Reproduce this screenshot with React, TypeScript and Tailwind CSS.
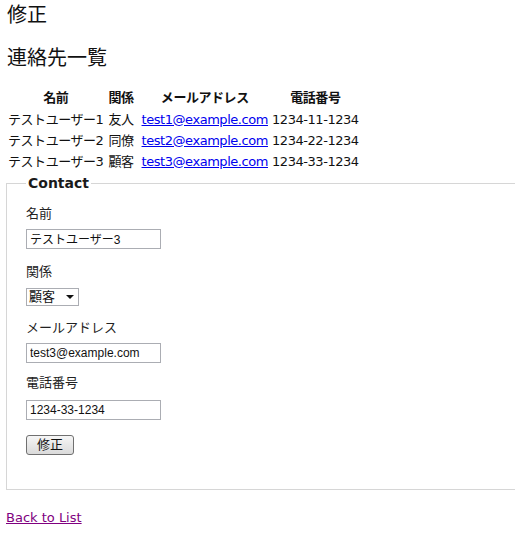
const contacts = [
  { name: 'テストユーザー1', relation: '友人', email: 'test1@example.com', phone: '1234-11-1234' },
  { name: 'テストユーザー2', relation: '同僚', email: 'test2@example.com', phone: '1234-22-1234' },
  { name: 'テストユーザー3', relation: '顧客', email: 'test3@example.com', phone: '1234-33-1234' },
];

const bodyFont = "font-['DejaVu_Sans','Noto_Sans_CJK_JP',sans-serif]";
const inputFont = "font-['Liberation_Sans','Noto_Sans_CJK_JP',sans-serif]";

function Field({ label, gap, top, children }: { label: string; gap: string; top: string; children: React.ReactNode }) {
  return (
    <div className={gap}>
      <div className="h-[22px] leading-[28px] text-[13px] text-[#222]">{label}</div>
      <div className={top}>{children}</div>
    </div>
  );
}

export default function App() {
  return (
    <div className={`w-[515px] h-[551px] overflow-hidden bg-white text-[#111] ${bodyFont}`}>
      <div className="px-[7px] pt-[3px]">
        <h1 className="text-[20px] leading-[24px] font-normal">修正</h1>
        <h2 className="mt-[19px] text-[20px] leading-[24px] font-normal">連絡先一覧</h2>

        <table className="mt-[17px] border-separate border-spacing-0 text-[13px] tracking-[-0.45px]">
          <thead>
            <tr className="h-[22px]">
              <th className="px-[1px] font-bold text-center">名前</th>
              <th className="px-[4px] font-bold text-center">関係</th>
              <th className="pl-[4px] pr-[2px] font-bold text-center">メールアドレス</th>
              <th className="px-[2px] font-bold text-center">電話番号</th>
            </tr>
          </thead>
          <tbody>
            {contacts.map((c) => (
              <tr key={c.email} className="h-[21px]">
                <td className="px-[1px] whitespace-nowrap">{c.name}</td>
                <td className="px-[4px] whitespace-nowrap">{c.relation}</td>
                <td className="pl-[4px] pr-[2px] whitespace-nowrap">
                  <a href="#" className="text-[#0000ee] underline">{c.email}</a>
                </td>
                <td className="px-[2px] whitespace-nowrap">{c.phone}</td>
              </tr>
            ))}
          </tbody>
        </table>
      </div>

      <fieldset className="ml-[6px] mt-[1px] w-[540px] border border-[#d6d6d6] pl-[19px] pt-[6px] pb-[33px]">
        <legend className="px-[2px] text-[14px] font-bold text-[#1a1a1a]">Contact</legend>

        <Field label="名前" gap="mb-[7px]" top="mt-[5px]">
          <input
            defaultValue="テストユーザー3"
            className={`w-[135px] h-[20px] border border-[#abadb3] px-[3px] text-[12px] ${inputFont}`}
          />
        </Field>

        <Field label="関係" gap="mb-[8px]" top="mt-[8px]">
          <div className="flex items-center w-[53px] h-[18px] border border-[#abadb3] bg-white px-[2px] text-[13px]">
            <span className="flex-1">顧客</span>
            <svg width="8" height="5" viewBox="0 0 8 5" className="mr-[2px]">
              <path d="M0 0h8L4 4z" fill="#111" />
            </svg>
          </div>
        </Field>

        <Field label="メールアドレス" gap="mb-[5px]" top="mt-[4px]">
          <input
            defaultValue="test3@example.com"
            className={`w-[135px] h-[20px] border border-[#abadb3] px-[3px] text-[12px] ${inputFont}`}
          />
        </Field>

        <Field label="電話番号" gap="mb-[0px]" top="mt-[6px]">
          <input
            defaultValue="1234-33-1234"
            className={`w-[135px] h-[20px] border border-[#abadb3] px-[3px] text-[12px] ${inputFont}`}
          />
        </Field>

        <button className="mt-[14px] w-[48px] h-[20px] rounded-[3px] border border-[#707070] bg-gradient-to-b from-[#f6f6f6] to-[#dadada] text-[13px] leading-[18px]">
          修正
        </button>
      </fieldset>

      <div className="px-[6px] mt-[15px]">
        <a href="#" className="text-[13px] text-[#800080] underline">Back to List</a>
      </div>
    </div>
  );
}
